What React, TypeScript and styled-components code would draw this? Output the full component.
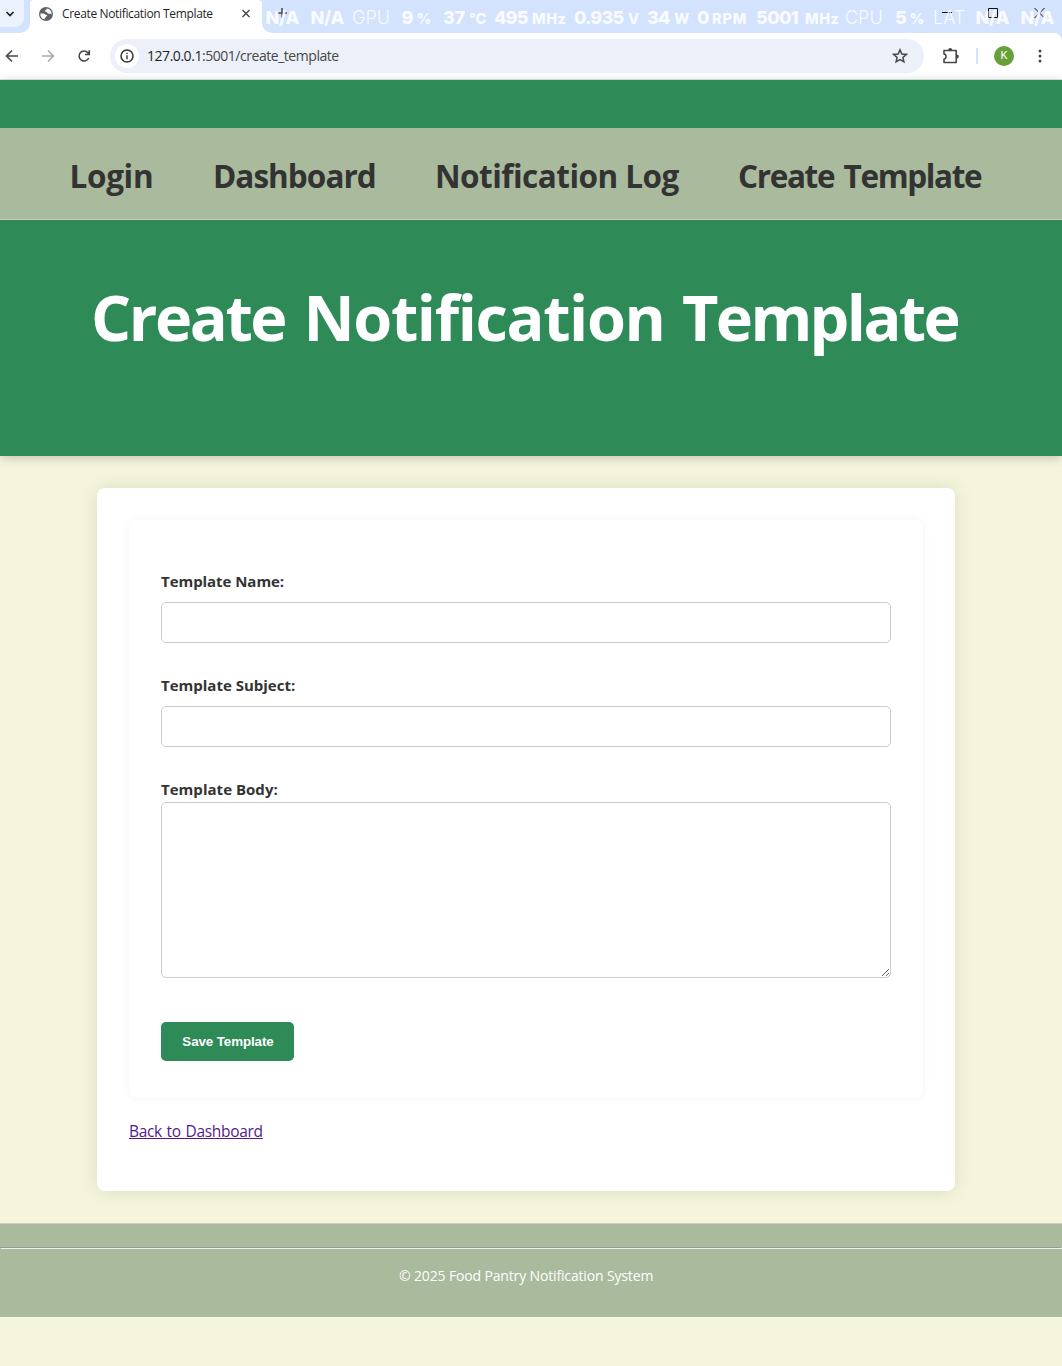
import React from "react";
import styled, { createGlobalStyle } from "styled-components";

const Global = createGlobalStyle`
  * { box-sizing: border-box; }
  body { margin: 0; background: #f5f5dc; color: #333; font-family: "Open Sans", "Noto Sans", sans-serif; font-size: 16px; }
`;

const Screen = styled.div`
  height: 1366px;
  overflow: hidden;
`;

/* Browser window */
const Browser = styled.div`
  position: relative;
  height: 80px;
  background: #d3e3fd;
`;
const TabStrip = styled.div`
  display: flex;
  height: 33px;
  background: #fff;
`;
const StripStart = styled.div`
  width: 30px;
  background: #d3e3fd;
  border-bottom-right-radius: 10px;
`;
const TabSearch = styled.div`
  display: flex;
  align-items: center;
  width: 24px;
  height: 27px;
  padding-left: 5px;
  background: #ecf2fe;
  border-radius: 0 0 9px 0;
`;
const TabSlot = styled.div`
  width: 232px;
  background: #d3e3fd;
`;
const Tab = styled.div`
  display: flex;
  align-items: center;
  height: 33px;
  padding: 0 9px 6px 9px;
  background: #fff;
  border-radius: 4px 4px 0 0;
`;
const TabTitle = styled.span`
  flex: 1;
  margin-left: 9px;
  font-size: 12px;
  letter-spacing: -0.35px;
  color: #1f1f1f;
  white-space: nowrap;
`;
const StripEnd = styled.div`
  display: flex;
  justify-content: space-between;
  flex: 1;
  padding: 7px 17px 0 14px;
  background: #d3e3fd;
  border-bottom-left-radius: 10px;
`;
const WindowButtons = styled.div`
  display: flex;
  gap: 36px;
`;
const Toolbar = styled.div`
  display: flex;
  align-items: center;
  height: 47px;
  padding: 0 0 1px 5px;
  background: #fff;
  border-bottom: 1px solid #dfe3e8;
  border-top-right-radius: 8px;
`;
const NavIcons = styled.div`
  display: flex;
  gap: 22px;
  width: 105px;
`;
const Address = styled.div`
  display: flex;
  align-items: center;
  width: 814px;
  height: 34px;
  padding: 0 16px 0 5px;
  background: #ecf0f9;
  border-radius: 17px;
`;
const InfoBadge = styled.span`
  display: grid;
  place-items: center;
  width: 24px;
  height: 24px;
  background: #fff;
  border-radius: 50%;
`;
const Url = styled.span`
  flex: 1;
  margin-left: 8px;
  font-size: 14px;
  letter-spacing: -0.46px;
  color: #474747;
  b { font-weight: 400; color: #1f1f1f; }
`;
const ToolbarEnd = styled.div`
  display: grid;
  grid-template-columns: 18px 2px 20px 20px;
  column-gap: 16px;
  align-items: center;
  padding-left: 18px;
`;
const Divider = styled.span`
  width: 2px;
  height: 16px;
  background: #d3e3fd;
`;
const Avatar = styled.span`
  display: grid;
  place-items: center;
  width: 20px;
  height: 20px;
  background: #689f38;
  border-radius: 50%;
  color: #fff;
  font: 11px Roboto, sans-serif;
`;

/* Hardware monitor readout floating over the window */
const Monitor = styled.div`
  position: absolute;
  left: 0;
  top: 7px;
  height: 22px;
  width: 1062px;
  pointer-events: none;
`;
const Reading = styled.span<{ $x: number; $kind: "value" | "unit" | "name"; $ls?: number }>`
  position: absolute;
  left: ${(p) => p.$x}px;
  bottom: ${(p) => (p.$kind === "unit" ? -1 : 0)}px;
  line-height: 22px;
  font-family: Inter, sans-serif;
  font-weight: ${(p) => (p.$kind === "name" ? 300 : 800)};
  font-size: ${(p) => (p.$kind === "unit" ? 14.5 : 18)}px;
  letter-spacing: ${(p) => p.$ls ?? 0}px;
  color: rgba(255, 255, 255, 0.88);
  white-space: nowrap;
`;

/* Page */
const Header = styled.header`
  position: relative;
  height: 376px;
  padding-top: 48px;
  background: #2e8b57;
  box-shadow: 0 2px 10px rgba(0, 0, 0, 0.2);
`;
const Nav = styled.nav`
  display: flex;
  gap: 60px;
  height: 92px;
  padding: 26px 0 0 69.5px;
  background: #a9ba9d;
  border-bottom: 1px solid #ccc;
`;
const NavLink = styled.a<{ $w: number; $ls: number; $ws?: number }>`
  width: ${(p) => p.$w}px;
  font-size: 31.5px;
  font-weight: 700;
  line-height: 44px;
  letter-spacing: ${(p) => p.$ls}px;
  word-spacing: ${(p) => p.$ws ?? 0}px;
  white-space: nowrap;
`;
const Title = styled.h1`
  display: flex;
  margin: 53px 0 0 91px;
  font-size: 63px;
  font-weight: 700;
  line-height: 88px;
  color: #fff;
  white-space: pre;
`;
const Word = styled.span<{ $w: number; $ls: number }>`
  width: ${(p) => p.$w}px;
  letter-spacing: ${(p) => p.$ls}px;
`;
const Card = styled.main`
  width: 858px;
  height: 703px;
  margin: 32px 0 32px 97px;
  padding: 32px;
  background: #fff;
  border-radius: 8px;
  box-shadow: 0 0 20px rgba(0, 0, 0, 0.1);
`;
const Form = styled.form`
  display: flex;
  flex-direction: column;
  align-items: flex-start;
  height: 578px;
  padding: 49px 32px 0;
  background: #fff;
  border-radius: 8px;
  box-shadow: 0 0 10px rgba(0, 0, 0, 0.05);
`;
const Label = styled.label<{ $gap: number; $ls: number }>`
  height: 24px;
  margin-bottom: ${(p) => p.$gap}px;
  font-size: 15px;
  font-weight: 700;
  line-height: 24px;
  letter-spacing: ${(p) => p.$ls}px;
`;
const Input = styled.input`
  width: 730px;
  height: 41px;
  margin-bottom: 30px;
  border: 1px solid #ccc;
  border-radius: 5px;
`;
const Body = styled.textarea`
  width: 730px;
  height: 176px;
  margin-bottom: 44px;
  border: 1px solid #ccc;
  border-radius: 5px;
`;
const Save = styled.button`
  width: 133px;
  height: 39px;
  padding: 0 0 0 1px;
  border: 0;
  border-radius: 5px;
  background: #2e8b57;
  color: #fff;
  font: bold 13.333px "Liberation Sans", Arial, sans-serif;
  letter-spacing: -0.08px;
  white-space: nowrap;
`;
const Back = styled.a`
  display: inline-block;
  margin-top: 21px;
  font-size: 15.5px;
  line-height: 24px;
  letter-spacing: -0.32px;
  word-spacing: 1px;
  color: #551a8b;
  text-decoration: underline;
`;
const Footer = styled.footer`
  height: 94px;
  padding-top: 23px;
  background: #a9ba9d;
  border-top: 1px solid #ccc;
  color: #fff;
`;
const Rule = styled.hr`
  margin: 0 0 16px;
  border: 1px solid;
  border-color: #9a9a9a #eee #eee #9a9a9a;
`;
const Copyright = styled.p`
  margin: 0;
  padding-left: 399px;
  font-size: 14px;
  line-height: 22px;
  letter-spacing: -0.15px;
  white-space: nowrap;
`;

type Kind = "value" | "unit" | "name";
const readings: [string, number, Kind, number?][] = [
  ["N/A", 265.5, "value", -0.3], ["N/A", 310.5, "value", -0.3], ["GPU", 352, "name"],
  ["9", 401.5, "value"], ["%", 416.5, "unit"], ["37", 443, "value", -0.3], ["°C", 469, "unit"],
  ["495", 494, "value", -0.8], ["MHz", 532, "unit", 0.5], ["0.935", 574, "value", -0.8], ["V", 628, "unit"],
  ["34", 647, "value", -0.8], ["W", 674, "unit"], ["0", 697, "value"], ["RPM", 712, "unit", 0.8],
  ["5001", 756, "value", -0.6], ["MHz", 805, "unit", 0.5], ["CPU", 845, "name"], ["5", 895, "value"],
  ["%", 909.5, "unit"], ["LAT", 933, "name"], ["N/A", 975.5, "value", -0.3], ["N/A", 1020.5, "value", -0.3],
];

const Stroke = ({ w, h, d, c = "#474747", s = 1.6 }: { w: number; h: number; d: string; c?: string; s?: number }) => (
  <svg width={w} height={h} viewBox={`0 0 ${w} ${h}`} fill="none" stroke={c} strokeWidth={s}>
    <path d={d} />
  </svg>
);

export default function App() {
  return (
    <Screen>
      <Global />
      <Browser>
        <TabStrip>
          <StripStart>
            <TabSearch><Stroke w={10} h={10} d="M1.5 3 5 6.5 8.5 3" c="#1f1f1f" s={1.7} /></TabSearch>
          </StripStart>
          <TabSlot>
            <Tab>
              <svg width="14" height="14" viewBox="0 0 14 14">
                <circle cx="7" cy="7" r="7" fill="#5f6368" />
                <path d="M8.300 1.500c-.3 1.300-1.500 1-2 1.800-.6 1 .2 1.600 1.200 1.700.9.100.7 1.600 1.900 1.800 1 .1 1.300-.6 2 0 .4.400.7.500 1.200.4A5.700 5.700 0 0 0 8.300 1.500Z" fill="#fff" />
                <path d="M1.400 6.400h3.100c1.300 0 1.500 1.300 2.700 1.400 1.100.1 1.200 1.500.1 1.700-1 .2-.6 1-1.100 1.500-.4.400-.7.600-.7 1.400A5.700 5.700 0 0 1 1.400 6.400Z" fill="#fff" />
              </svg>
              <TabTitle>Create Notification Template</TabTitle>
              <Stroke w={14} h={14} d="M3.500 3l7 7M10.500 3l-7 7" c="#444" s={1.4} />
            </Tab>
          </TabSlot>
          <StripEnd>
            <Stroke w={12} h={12} d="M6 1v10M1 6h10" s={1.5} />
            <WindowButtons>
              <Stroke w={10} h={12} d="M0 5.500h10" c="#111" s={1} />
              <Stroke w={10} h={12} d="M.5 1.500h9v9h-9z" c="#111" s={1} />
              <Stroke w={11} h={12} d="M.5 1l10 10M10.500 1l-10 10" c="#111" s={1} />
            </WindowButtons>
          </StripEnd>
        </TabStrip>
        <Toolbar>
          <NavIcons>
            <Stroke w={14} h={14} d="M13 7H1.800M7 1.500 1.500 7 7 12.500" />
            <Stroke w={14} h={14} d="M1 7h11.200M7 1.500 12.500 7 7 12.500" c="#aaa" />
            <Stroke w={14} h={14} d="M11.700 9A5 5 0 1 1 10.800 3.600L12.300 5.200M12.300 1.200v4.300H8" />
          </NavIcons>
          <Address>
            <InfoBadge>
              <svg width="14" height="14" viewBox="0 0 14 14">
                <circle cx="7" cy="7" r="6" fill="none" stroke="#333" strokeWidth="1.500" />
                <path d="M6.300 6.200h1.400v4H6.300zM6.300 3.700h1.400v1.400H6.300z" fill="#333" />
              </svg>
            </InfoBadge>
            <Url><b>127.0.0.1</b>:5001/create_template</Url>
            <Stroke w={16} h={16} d="M8 1.800 9.800 6l4.500.4-3.400 3 1 4.400L8 11.500l-3.900 2.300 1-4.400-3.400-3L6.200 6Z" s={1.5} />
          </Address>
          <ToolbarEnd>
            <svg width="18" height="18" viewBox="0 0 18 18">
              <path d="M2 3.500h12.200v12H2v-3.300c2.700-.6 2.700-4.700 0-5.300Z" fill="none" stroke="#474747" strokeWidth="1.600" strokeLinejoin="round" />
              <path d="M6.200 3a2 2 0 0 1 4 0ZM14.800 7.500a2 2 0 0 1 0 4Z" fill="#474747" />
            </svg>
            <Divider />
            <Avatar>K</Avatar>
            <svg width="20" height="16" viewBox="0 0 20 16" fill="#474747">
              <circle cx="10" cy="3" r="1.500" /><circle cx="10" cy="8" r="1.500" /><circle cx="10" cy="13" r="1.500" />
            </svg>
          </ToolbarEnd>
        </Toolbar>
        <Monitor>
          {readings.map(([text, x, kind, ls]) => (
            <Reading key={x} $x={x} $kind={kind} $ls={ls}>{text}</Reading>
          ))}
        </Monitor>
      </Browser>
      <Header>
        <Nav>
          <NavLink $w={83.5} $ls={-0.33}>Login</NavLink>
          <NavLink $w={162} $ls={-0.96}>Dashboard</NavLink>
          <NavLink $w={243} $ls={-0.52}>Notification Log</NavLink>
          <NavLink $w={244} $ls={-1.35} $ws={2.5}>Create Template</NavLink>
        </Nav>
        <Title>
          <Word $w={212.5} $ls={-2.4}>{"Create "}</Word>
          <Word $w={378.5} $ls={-1.4}>{"Notification "}</Word>
          <Word $w={280} $ls={-2.65}>Template</Word>
        </Title>
      </Header>
      <Card>
        <Form>
          <Label $gap={9} $ls={-0.05}>Template Name:</Label>
          <Input />
          <Label $gap={9} $ls={0}>Template Subject:</Label>
          <Input />
          <Label $gap={1} $ls={0.03}>Template Body:</Label>
          <Body />
          <Save type="button">Save Template</Save>
        </Form>
        <Back>Back to Dashboard</Back>
      </Card>
      <Footer>
        <Rule />
        <Copyright>© 2025 Food Pantry Notification System</Copyright>
      </Footer>
    </Screen>
  );
}
